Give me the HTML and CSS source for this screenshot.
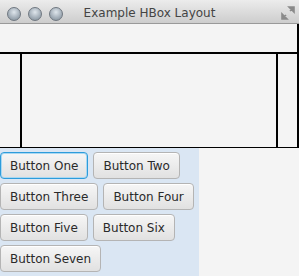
FILE: index.html
```html
<!DOCTYPE html>
<html lang="en">
<head>
    <meta charset="UTF-8">
    <meta name="viewport" content="width=device-width, initial-scale=1.0">
    <title>Example HBox Layout</title>
    <link rel="stylesheet" href="styles.css">
</head>
<body>
    <div class="window">
        <div class="titlebar">
            <div class="lights">
                <span class="light"></span>
                <span class="light"></span>
                <span class="light"></span>
            </div>
            <div class="title">Example HBox Layout</div>
            <svg class="resize" width="14" height="14" viewBox="0 0 14 14">
                <path d="M8 1 L13 1 L13 6 Z M13 1 L9 5" fill="#8a8a8a" stroke="#8a8a8a" stroke-width="1.6"/>
                <path d="M1 8 L1 13 L6 13 Z M1 13 L5 9" fill="#8a8a8a" stroke="#8a8a8a" stroke-width="1.6"/>
            </svg>
        </div>

        <div class="top-box"></div>
        <div class="middle">
            <div class="left-box"></div>
            <div class="center-box"></div>
            <div class="right-box"></div>
        </div>

        <div class="bottom">
            <div class="flow">
                <button class="btn focused">Button One</button>
                <button class="btn">Button Two</button>
                <button class="btn">Button Three</button>
                <button class="btn">Button Four</button>
                <button class="btn">Button Five</button>
                <button class="btn">Button Six</button>
                <button class="btn">Button Seven</button>
            </div>
        </div>
    </div>
</body>
</html>
```

FILE: styles.css
```css
body {
    margin: 0;
    font-family: "DejaVu Sans", Arial, sans-serif;
    background: #f4f4f4;
}
.window {
    width: 299px;
    height: 276px;
    overflow: hidden;
    background: #f4f4f4;
}
.titlebar {
    height: 23px;
    display: grid;
    grid-template-columns: 1fr auto 1fr;
    align-items: center;
    background: linear-gradient(#ececec, #cdcdcd);
    border-bottom: 1px solid #999;
}
.lights {
    display: flex;
    gap: 7px;
    padding-left: 7px;
    padding-top: 4px;
}
.light {
    width: 12px;
    height: 12px;
    border-radius: 50%;
    border: 1px solid #6f7780;
    background: radial-gradient(circle at 50% 35%, #dfe6ec 0%, #a6b1bb 55%, #7f8b96 100%);
}
.title {
    font-size: 12px;
    color: #444;
    padding-top: 3px;
}
.resize {
    justify-self: end;
    margin-right: 4px;
    margin-top: 2px;
}
.top-box {
    height: 28px;
    border-right: 2px solid #000;
    border-bottom: 2px solid #000;
}
.middle {
    display: flex;
    height: 93px;
    border-bottom: 1px solid #000;
}
.left-box {
    width: 20px;
    border-right: 2px solid #000;
}
.center-box {
    flex: 1;
    border-right: 2px solid #000;
}
.right-box {
    width: 19px;
    border-right: 2px solid #000;
}
.bottom {
    height: 128px;
}
.flow {
    width: 199px;
    height: 100%;
    box-sizing: border-box;
    background: #dae6f3;
    padding: 4px 0 0 0;
    display: flex;
    flex-wrap: wrap;
    align-content: flex-start;
    column-gap: 5px;
    row-gap: 4px;
}
.btn {
    height: 27px;
    padding: 0 9px;
    font-family: "DejaVu Sans", Arial, sans-serif;
    font-size: 12px;
    color: #2a2a2a;
    background: linear-gradient(#f6f6f6, #e1e1e1);
    border: 1px solid #b4b4b4;
    border-radius: 4px;
    box-shadow: inset 0 1px 0 #ffffff;
}
.btn.focused {
    border: 1px solid #2d9cdb;
    box-shadow: inset 0 0 0 1px #a9d8f2;
}
```
